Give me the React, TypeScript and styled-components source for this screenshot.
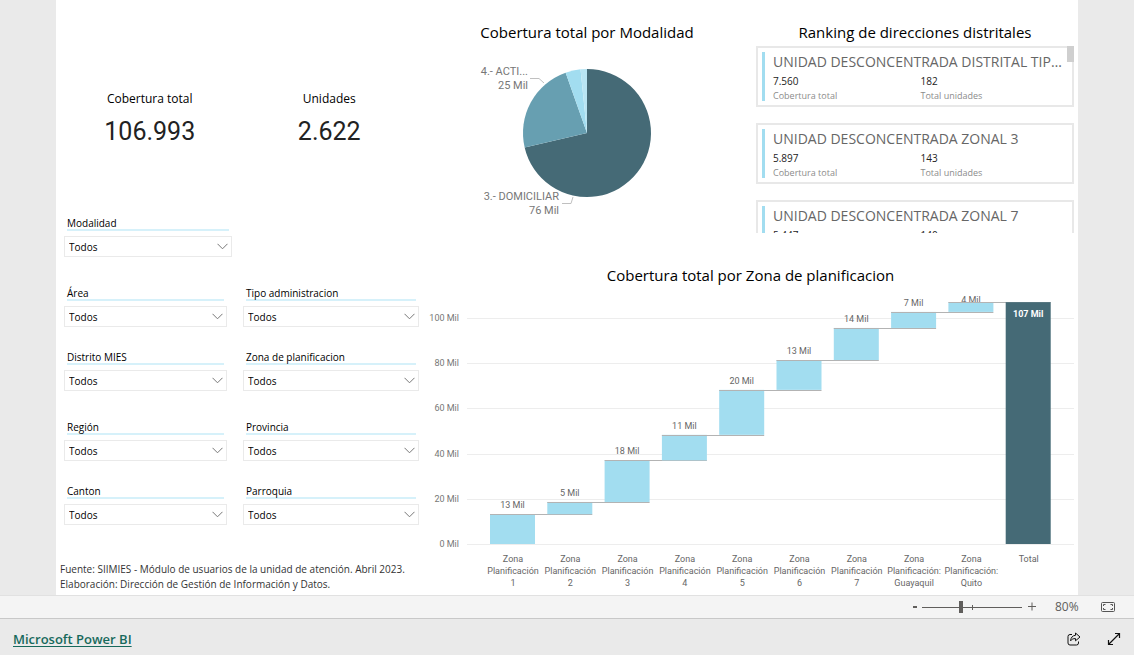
import React, { useState } from "react";
import styled, { createGlobalStyle } from "styled-components";

const sans = `"Segoe UI", "Open Sans", "Noto Sans", sans-serif`;
const din = `"DIN", Roboto, "Liberation Sans", sans-serif`;

const color = {
  dark: "#456a76",
  mid: "#679fb1",
  light: "#a2ddf0",
  pale: "#b9e5f3",
  label: "#777777",
  grid: "#ededed",
};

const GlobalStyle = createGlobalStyle`
  *, *::before, *::after { box-sizing: border-box; }
  body { margin: 0; background: #eaeaea; font-family: ${sans}; color: #000; }
  h2, h3, p, dl, dd, dt, ul { margin: 0; padding: 0; font-weight: 400; }
`;

const Page = styled.div`
  display: flex;
  flex-direction: column;
  min-height: 100vh;
`;

const Stage = styled.main`
  flex: 1;
  display: flex;
  padding: 0 56px;
`;

const Report = styled.div`
  flex: 1;
  display: grid;
  grid-template-columns: minmax(0, 371fr) minmax(0, 651fr);
  background: #fff;
`;

const Side = styled.section`
  display: flex;
  flex-direction: column;
  padding: 89px 8px 3px 4px;
`;

const KpiRow = styled.div`
  display: grid;
  grid-template-columns: 1fr 1fr;
  height: 124px;
`;

const Kpi = styled.div`
  display: flex;
  flex-direction: column;
  align-items: center;
`;

const KpiLabel = styled.span`
  font-size: 12px;
  line-height: 20px;
`;

const KpiValue = styled.span`
  font-family: ${din};
  font-size: 25px;
  line-height: 46px;
  color: #222;
`;

const FilterGrid = styled.div`
  display: grid;
  grid-template-columns: 163fr 176fr;
  column-gap: 16px;
  row-gap: 20px;
  margin-top: 26px;
  padding-left: 4px;
`;

const SingleFilter = styled.div`
  width: 48%;
  padding-left: 4px;
`;

const FilterBox = styled.div`
  display: flex;
  flex-direction: column;
  gap: 5px;
`;

const FilterLabel = styled.label`
  height: 18px;
  margin: 0 3px;
  padding-top: 2px;
  border-bottom: 2px solid #d6f1fa;
  font-size: 10px;
  line-height: 16px;
`;

const SelectWrap = styled.div`
  position: relative;
`;

const Select = styled.select`
  display: block;
  width: 100%;
  height: 21px;
  padding: 1px 20px 0 4px;
  appearance: none;
  border: 1px solid #eaeaea;
  border-radius: 0;
  background: #fff;
  color: #000;
  font: 10px/18px ${sans};
`;

const Chevron = styled.svg`
  position: absolute;
  right: 4px;
  top: 7px;
  pointer-events: none;
`;

const Source = styled.p`
  margin-top: auto;
  font-size: 10px;
  line-height: 15px;
  color: #333;
`;

const Charts = styled.section`
  display: flex;
  flex-direction: column;
`;

const TopRow = styled.div`
  display: grid;
  grid-template-columns: minmax(0, 329fr) minmax(0, 322fr);
  height: 243px;
`;

const VisualTitle = styled.h2`
  margin-bottom: 1px;
  font-size: 15px;
  line-height: 22px;
  text-align: center;
`;

const PieVisual = styled.div`
  padding: 21px 9px 0 0;
`;

const Drawing = styled.svg`
  display: block;
  width: 100%;
  height: auto;
  font-family: ${din};
`;

const RankVisual = styled.div`
  display: flex;
  flex-direction: column;
  padding: 21px 4px 10px 0;
`;

const RankScroller = styled.div`
  position: relative;
  height: 187px;
  margin-top: 2px;
`;

const RankList = styled.ul`
  display: flex;
  flex-direction: column;
  gap: 16px;
  height: 100%;
  overflow: hidden;
  list-style: none;
`;

const ScrollThumb = styled.span`
  position: absolute;
  top: 0;
  right: 0;
  width: 7px;
  height: 16px;
  background: #cfcfcf;
`;

const RankCard = styled.li`
  flex: none;
  display: flex;
  gap: 8px;
  height: 61px;
  padding: 4px;
  border: 2px solid #e8e8e8;
`;

const RankBar = styled.span`
  width: 3px;
  background: ${color.light};
`;

const RankBody = styled.div`
  flex: 1;
  min-width: 0;
`;

const RankName = styled.h3`
  padding-right: 3px;
  font-size: 14px;
  font-weight: 500;
  line-height: 20px;
  color: #666;
  white-space: nowrap;
  overflow: hidden;
  text-overflow: ellipsis;
`;

const RankStats = styled.dl`
  display: grid;
  grid-template-columns: 1fr 1fr;
`;

const RankStat = styled.div`
  display: flex;
  flex-direction: column-reverse;
`;

const StatName = styled.dt`
  font-size: 9px;
  line-height: 10px;
  color: #8c8c8c;
`;

const StatValue = styled.dd`
  font-size: 10px;
  line-height: 19px;
  color: #222;
`;

const WaterfallVisual = styled.div`
  padding: 21px 4px 0 0;
`;

const ZoomBar = styled.div`
  display: flex;
  align-items: center;
  justify-content: flex-end;
  height: 24px;
  padding-right: 17px;
  border-top: 1px solid #e1e1e1;
  border-bottom: 1px solid #c8c8c8;
  background: #f4f4f4;
`;

const IconButton = styled.button<{ $size: number }>`
  display: flex;
  align-items: center;
  justify-content: center;
  width: ${(p) => p.$size}px;
  height: ${(p) => p.$size}px;
  padding: 0;
  border: 0;
  background: none;
  color: #222;
`;

const SliderWrap = styled.div`
  position: relative;
  display: flex;
  margin-right: 2px;
`;

const SliderTick = styled.span`
  position: absolute;
  left: 50%;
  top: 4px;
  width: 1px;
  height: 5px;
  background: #605e5c;
`;

const Slider = styled.input`
  width: 100px;
  height: 12px;
  margin: 0;
  appearance: none;
  background: linear-gradient(#605e5c, #605e5c) center / 100% 1px no-repeat;
  &::-webkit-slider-thumb {
    appearance: none;
    width: 4px;
    height: 12px;
    background: #605e5c;
  }
`;

const ZoomValue = styled.span`
  width: 44px;
  margin-left: 15px;
  font-size: 12px;
  line-height: 20px;
  color: #605e5c;
`;

const Footer = styled.footer`
  display: flex;
  align-items: center;
  gap: 20px;
  height: 36px;
  padding: 3px 10px 0 13px;
  background: #eaeaea;
`;

const BrandLink = styled.a`
  margin-right: auto;
  font-size: 13px;
  font-weight: 600;
  color: #17695c;
  text-underline-offset: 2px;
`;

type FilterProps = { id: string; label: string };

const Filter = ({ id, label }: FilterProps) => (
  <FilterBox>
    <FilterLabel htmlFor={id}>{label}</FilterLabel>
    <SelectWrap>
      <Select id={id} defaultValue="Todos">
        <option>Todos</option>
      </Select>
      <Chevron width="11" height="7" viewBox="0 0 11 7" fill="none" stroke="#777">
        <path d="M0.5 0.8 5.5 5.8 10.5 0.8" />
      </Chevron>
    </SelectWrap>
  </FilterBox>
);

const filterRows: FilterProps[][] = [
  [
    { id: "area", label: "Área" },
    { id: "tipo", label: "Tipo administracion" },
    { id: "distrito", label: "Distrito MIES" },
    { id: "zona", label: "Zona de planificacion" },
  ],
  [
    { id: "region", label: "Región" },
    { id: "provincia", label: "Provincia" },
    { id: "canton", label: "Canton" },
    { id: "parroquia", label: "Parroquia" },
  ],
];

const ranking = [
  { name: "UNIDAD DESCONCENTRADA DISTRITAL TIPO B", total: "7.560", units: "182" },
  { name: "UNIDAD DESCONCENTRADA ZONAL 3", total: "5.897", units: "143" },
  { name: "UNIDAD DESCONCENTRADA ZONAL 7", total: "5.447", units: "140" },
];

const slices = [
  { from: 0, to: 257, fill: color.dark },
  { from: 257, to: 340.5, fill: color.mid },
  { from: 340.5, to: 354.2, fill: color.light },
  { from: 354.2, to: 360, fill: color.pale },
];

const slicePath = (from: number, to: number) => {
  const cx = 160;
  const cy = 89;
  const r = 64;
  const at = (deg: number) => {
    const a = ((deg - 90) * Math.PI) / 180;
    return `${cx + r * Math.cos(a)} ${cy + r * Math.sin(a)}`;
  };
  return `M${cx} ${cy}L${at(from)}A${r} ${r} 0 ${to - from > 180 ? 1 : 0} 1 ${at(to)}Z`;
};

const Pie = () => (
  <Drawing viewBox="0 0 320 180" role="img" aria-label="Cobertura total por Modalidad">
    {slices.map((s) => (
      <path key={s.from} d={slicePath(s.from, s.to)} fill={s.fill} />
    ))}
    <g fill="none" stroke="#c0c0c0">
      <path d="M103 34.5H112L117 39" />
      <path d="M135 159.5H144L146 153" />
    </g>
    <g fill={color.label} fontSize="11" textAnchor="end">
      <text x="101" y="31">4.- ACTI...</text>
      <text x="101" y="45">25 Mil</text>
      <text x="132" y="156">3.- DOMICILIAR</text>
      <text x="132" y="170">76 Mil</text>
    </g>
  </Drawing>
);

const zones = [
  { name: ["Zona", "Planificación", "1"], value: 13, end: 13.2 },
  { name: ["Zona", "Planificación", "2"], value: 5, end: 18.6 },
  { name: ["Zona", "Planificación", "3"], value: 18, end: 37 },
  { name: ["Zona", "Planificación", "4"], value: 11, end: 48.3 },
  { name: ["Zona", "Planificación", "5"], value: 20, end: 68.2 },
  { name: ["Zona", "Planificación", "6"], value: 13, end: 81.4 },
  { name: ["Zona", "Planificación", "7"], value: 14, end: 95.6 },
  { name: ["Zona", "Planificación:", "Guayaquil"], value: 7, end: 102.7 },
  { name: ["Zona", "Planificación:", "Quito"], value: 4, end: 107 },
];

const chartY = (v: number) => 257 - v * 2.26;
const chartX = (i: number) => 63 + i * 57.3;

const Waterfall = () => (
  <Drawing viewBox="0 0 647 304" role="img" aria-label="Cobertura total por Zona de planificacion">
    {[0, 20, 40, 60, 80, 100].map((v) => (
      <g key={v}>
        <path d={`M40 ${Math.round(chartY(v)) + 0.5}H647`} stroke={color.grid} />
        <text x="32" y={chartY(v) + 3} fontSize="9" fill={color.label} textAnchor="end">
          {v} Mil
        </text>
      </g>
    ))}
    {zones.map((z, i) => {
      const start = i ? zones[i - 1].end : 0;
      const x = chartX(i);
      return (
        <g key={i} textAnchor="middle" fill="#666" fontSize="9">
          <rect x={x} y={chartY(z.end)} width="45" height={chartY(start) - chartY(z.end)} fill={color.light} />
          <text x={x + 22.5} y={Math.max(chartY(z.end) - 6, 16)}>{z.value} Mil</text>
          <path d={`M${x} ${Math.round(chartY(z.end)) + 0.5}h102.3`} stroke="#b3b3b3" />
          {z.name.map((line, n) => (
            <text key={n} x={x + 23} y={275 + n * 12}>
              {line}
            </text>
          ))}
        </g>
      );
    })}
    <rect x={chartX(9)} y={chartY(107)} width="45" height={257 - chartY(107)} fill={color.dark} />
    <g textAnchor="middle" fontSize="9">
      <text x={chartX(9) + 22.5} y="30" fill="#fff" fontWeight="700">107 Mil</text>
      <text x={chartX(9) + 23} y="275" fill="#666">Total</text>
    </g>
  </Drawing>
);

export default function App() {
  const [zoom, setZoom] = useState(80);
  return (
    <>
      <GlobalStyle />
      <Page>
        <Stage>
          <Report>
            <Side>
              <KpiRow>
                <Kpi>
                  <KpiLabel>Cobertura total</KpiLabel>
                  <KpiValue>106.993</KpiValue>
                </Kpi>
                <Kpi>
                  <KpiLabel>Unidades</KpiLabel>
                  <KpiValue>2.622</KpiValue>
                </Kpi>
              </KpiRow>
              <SingleFilter>
                <Filter id="modalidad" label="Modalidad" />
              </SingleFilter>
              {filterRows.map((row, i) => (
                <FilterGrid key={i}>
                  {row.map((f) => (
                    <Filter key={f.id} {...f} />
                  ))}
                </FilterGrid>
              ))}
              <Source>
                Fuente: SIIMIES - Módulo de usuarios de la unidad de atención. Abril 2023.
                <br />
                Elaboración: Dirección de Gestión de Información y Datos.
              </Source>
            </Side>
            <Charts>
              <TopRow>
                <PieVisual>
                  <VisualTitle>Cobertura total por Modalidad</VisualTitle>
                  <Pie />
                </PieVisual>
                <RankVisual>
                  <VisualTitle>Ranking de direcciones distritales</VisualTitle>
                  <RankScroller>
                    <RankList>
                      {ranking.map((r) => (
                        <RankCard key={r.name}>
                          <RankBar />
                          <RankBody>
                            <RankName>{r.name}</RankName>
                            <RankStats>
                              <RankStat>
                                <StatName>Cobertura total</StatName>
                                <StatValue>{r.total}</StatValue>
                              </RankStat>
                              <RankStat>
                                <StatName>Total unidades</StatName>
                                <StatValue>{r.units}</StatValue>
                              </RankStat>
                            </RankStats>
                          </RankBody>
                        </RankCard>
                      ))}
                    </RankList>
                    <ScrollThumb />
                  </RankScroller>
                </RankVisual>
              </TopRow>
              <WaterfallVisual>
                <VisualTitle>Cobertura total por Zona de planificacion</VisualTitle>
                <Waterfall />
              </WaterfallVisual>
            </Charts>
          </Report>
        </Stage>
        <ZoomBar>
          <IconButton $size={14} aria-label="Alejar" onClick={() => setZoom(zoom - 10)}>
            <svg width="14" height="14" viewBox="0 0 14 14" stroke="#605e5c" strokeWidth="2">
              <path d="M5 7H9" />
            </svg>
          </IconButton>
          <SliderWrap>
            <Slider
              type="range"
              aria-label="Zoom"
              min={10}
              max={190}
              value={zoom}
              onChange={(e) => setZoom(Number(e.target.value))}
            />
            <SliderTick />
          </SliderWrap>
          <IconButton $size={16} aria-label="Acercar" onClick={() => setZoom(zoom + 10)}>
            <svg width="14" height="14" viewBox="0 0 14 14" stroke="#605e5c">
              <path d="M3 6.5H11M7 2.5V10.5" />
            </svg>
          </IconButton>
          <ZoomValue>{zoom}%</ZoomValue>
          <IconButton $size={18} aria-label="Ajustar a la página">
            <svg width="16" height="12" viewBox="0 0 16 12" fill="none" stroke="#555">
              <rect x="1.5" y="1.5" width="13" height="9" rx="1" />
              <path d="M5.5 3.5H3.5V5M3.5 7V8.5H5.5M10.5 3.5H12.5V5M12.5 7V8.5H10.5" />
            </svg>
          </IconButton>
        </ZoomBar>
        <Footer>
          <BrandLink href="#">Microsoft Power BI</BrandLink>
          <IconButton $size={20} aria-label="Compartir">
            <svg width="14" height="14" viewBox="0 0 14 14" fill="none" stroke="#111" strokeLinejoin="round">
              <path d="M5 2.5H3A2 2 0 0 0 1 4.5V11A2 2 0 0 0 3 13H9.5A2 2 0 0 0 11.5 11V9.5" />
              <path d="M8.5 1 13 5 8.5 8.8V6.6C6.2 6.5 4.8 7.2 3.6 8.8C3.8 5.6 5.6 3.5 8.5 3.3Z" />
            </svg>
          </IconButton>
          <IconButton $size={20} aria-label="Pantalla completa">
            <svg width="14" height="14" viewBox="0 0 14 14" fill="none" stroke="#111" strokeWidth="1.2">
              <path d="M1.5 12.5 12.5 1.5M8 1.5H12.5V6M1.5 8V12.5H6" />
            </svg>
          </IconButton>
        </Footer>
      </Page>
    </>
  );
}
